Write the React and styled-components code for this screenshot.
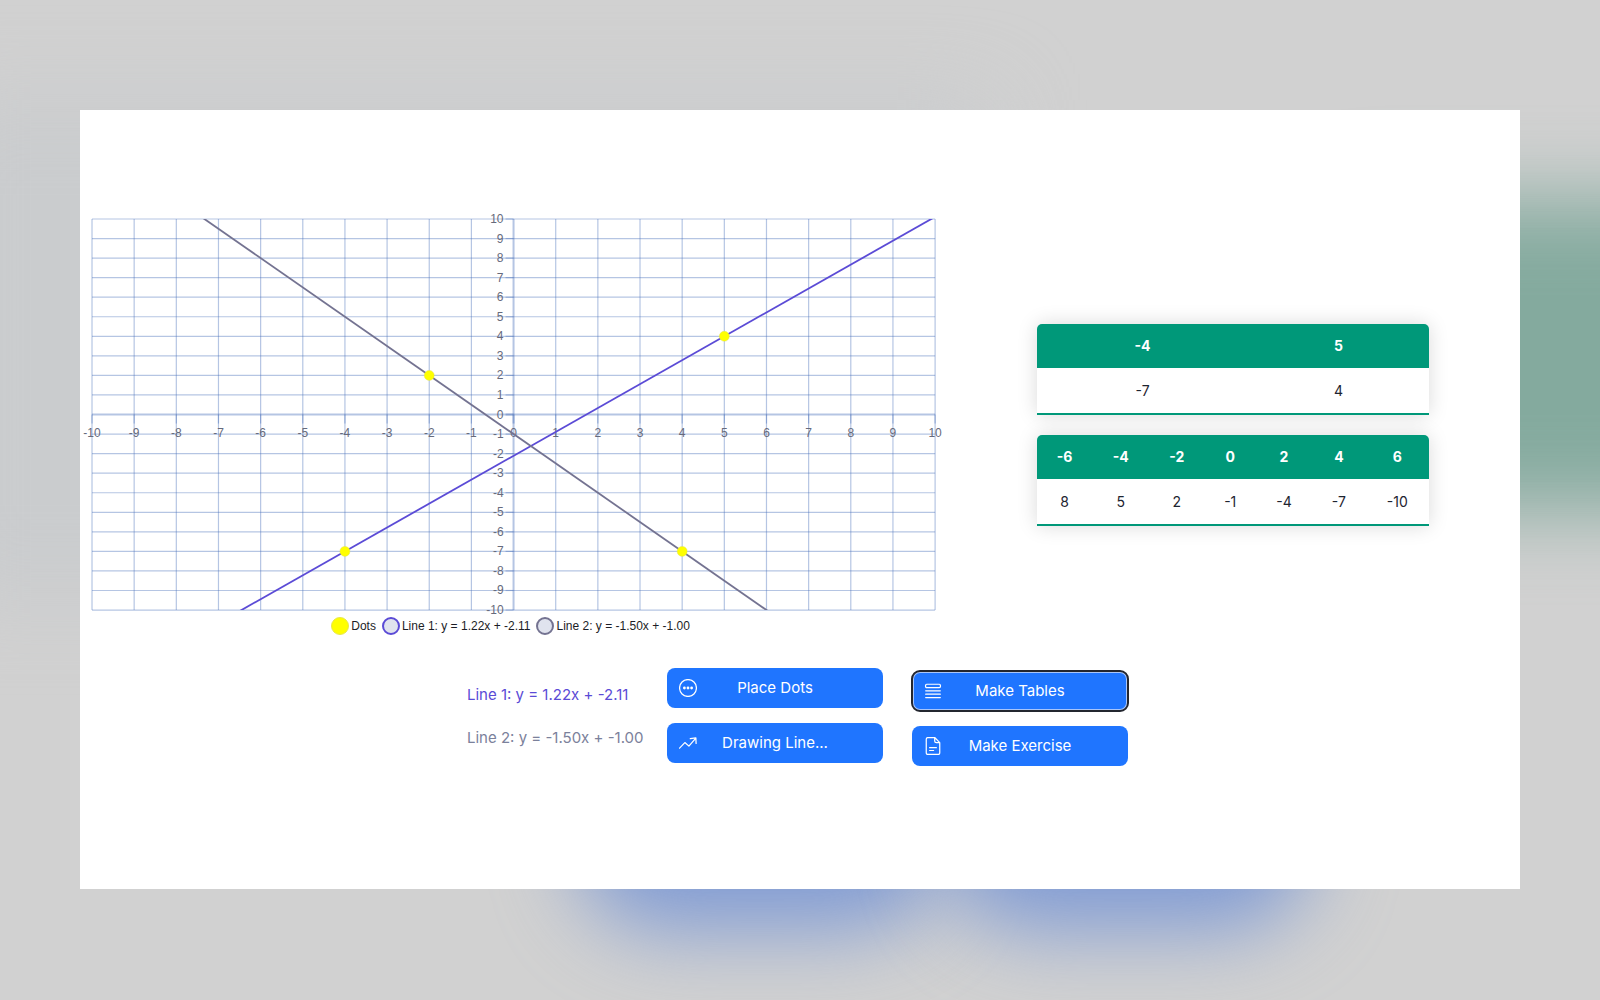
import styled, { createGlobalStyle } from "styled-components";

const GlobalStyle = createGlobalStyle`
	* {
		box-sizing: border-box;
	}

	body {
		margin: 0;
		font-family: Inter, "Liberation Sans", sans-serif;
		color: #1e2430;
	}
`;

const TICKS = Array.from({ length: 21 }, (_, i) => i - 10);

const DOTS = [
	{ x: -4, y: -7 },
	{ x: 5, y: 4 },
	{ x: -2, y: 2 },
	{ x: 4, y: -7 },
];

const LINES = [
	{ label: "Line 1: y = 1.22x + -2.11", color: "#5b4bd6", m: 11 / 9, b: -19 / 9 },
	{ label: "Line 2: y = -1.50x + -1.00", color: "#747391", m: -1.5, b: -1 },
];

const TABLES = [
	{ xs: [-4, 5], ys: [-7, 4] },
	{ xs: [-6, -4, -2, 0, 2, 4, 6], ys: [8, 5, 2, -1, -4, -7, -10] },
];

const LEFT = 12;
const TOP = 12;
const WIDTH = 843;
const HEIGHT = 391;

const px = (x) => LEFT + ((x + 10) * WIDTH) / 20;
const py = (y) => TOP + ((10 - y) * HEIGHT) / 20;

function Chart() {
	return (
		<Figure>
			<Plot viewBox="0 0 867 410" role="img" aria-label="Coordinate plane with two lines">
				<defs>
					<clipPath id="area">
						<rect x={LEFT} y={TOP} width={WIDTH} height={HEIGHT} />
					</clipPath>
				</defs>
				{TICKS.map((t) => (
					<g key={t} stroke="#466eb9" strokeOpacity="0.4" strokeWidth={t === 0 ? 2 : 1.2}>
						<line x1={px(t)} x2={px(t)} y1={TOP} y2={py(-10)} />
						<line x1={LEFT} x2={px(10)} y1={py(t)} y2={py(t)} />
						<line x1={px(t)} x2={px(t)} y1={py(0)} y2={py(0) + 9} />
						<line x1={px(0) - 8} x2={px(0)} y1={py(t)} y2={py(t)} />
					</g>
				))}
				{TICKS.map((t) => (
					<g key={t}>
						<AxisLabel x={px(t)} y={py(0) + 22} textAnchor="middle">
							{t}
						</AxisLabel>
						<AxisLabel x={px(0) - 10} y={py(t) + 4} textAnchor="end">
							{t}
						</AxisLabel>
					</g>
				))}
				<g clipPath="url(#area)" strokeWidth="1.8">
					{LINES.map((l) => (
						<line
							key={l.label}
							stroke={l.color}
							x1={px(-10)}
							y1={py(l.m * -10 + l.b)}
							x2={px(10)}
							y2={py(l.m * 10 + l.b)}
						/>
					))}
				</g>
				{DOTS.map((d) => (
					<circle key={`${d.x}/${d.y}`} cx={px(d.x)} cy={py(d.y)} r="5" fill="#ffff00" stroke="#d9dc6a" strokeWidth="0.4" />
				))}
			</Plot>
			<Legend>
				<LegendItem>
					<Marker $fill="#ffff00" $border="#e8e84a" $thin />
					Dots
				</LegendItem>
				{LINES.map((l) => (
					<LegendItem key={l.label}>
						<Marker $fill="#e0e3ee" $border={l.color} />
						{l.label}
					</LegendItem>
				))}
			</Legend>
		</Figure>
	);
}

function DotsIcon() {
	return (
		<Icon viewBox="0 0 16 16">
			<circle cx="8" cy="8" r="7.5" />
			<g fill="currentColor" stroke="none">
				<circle cx="4.8" cy="8" r="1.25" />
				<circle cx="8" cy="8" r="1.25" />
				<circle cx="11.2" cy="8" r="1.25" />
			</g>
		</Icon>
	);
}

function GraphIcon() {
	return (
		<Icon viewBox="0 0 16 16">
			<path d="M0.5 12.6 L5.2 7.6 L8.8 10.8 L14.2 4.6 M10 4.2 L15 3.4 L15.2 8.4" />
		</Icon>
	);
}

function TableIcon() {
	return (
		<Icon viewBox="0 0 16 16">
			<rect x="1.4" y="2" width="13.2" height="3" rx="1" />
			<path d="M1.5 7.8h13M1.5 10.8h13M1.5 13.8h13" />
		</Icon>
	);
}

function FileIcon() {
	return (
		<Icon viewBox="0 0 16 16">
			<path d="M9.5 0.5H3.5a1.5 1.5 0 0 0-1.5 1.5v12a1.5 1.5 0 0 0 1.5 1.5h9a1.5 1.5 0 0 0 1.5-1.5V5zM9.5 0.5V3.5A1.5 1.5 0 0 0 11 5h3M5 9.5h6M5 12h3.5" />
		</Icon>
	);
}

export default function App() {
	return (
		<Page>
			<GlobalStyle />
			<Haze />
			<GreenGlow />
			<BlueGlow $left="36%" $width="23%" />
			<BlueGlow $left="59%" $width="23%" />
			<Board>
				<Top>
					<Chart />
					<Tables>
						{TABLES.map((t) => (
							<Table key={t.xs.join()}>
								<thead>
									<tr>
										{t.xs.map((x) => (
											<th key={x} scope="col">
												{x}
											</th>
										))}
									</tr>
								</thead>
								<tbody>
									<tr>
										{t.ys.map((y) => (
											<td key={y}>{y}</td>
										))}
									</tr>
								</tbody>
							</Table>
						))}
					</Tables>
				</Top>
				<Controls>
					<Equations>
						<Equation $color="#5b4bd6">{LINES[0].label}</Equation>
						<Equation $color="#7b819b">{LINES[1].label}</Equation>
					</Equations>
					<Buttons>
						<Button type="button">
							<DotsIcon />
							<span>Place Dots</span>
						</Button>
						<Button type="button">
							<GraphIcon />
							<span>Drawing Line...</span>
						</Button>
					</Buttons>
					<Buttons $low>
						<Button type="button" $focused>
							<TableIcon />
							<span>Make Tables</span>
						</Button>
						<Button type="button">
							<FileIcon />
							<span>Make Exercise</span>
						</Button>
					</Buttons>
				</Controls>
			</Board>
		</Page>
	);
}

const Page = styled.div`
	position: relative;
	min-height: 100vh;
	padding: 110px 5% 111px;
	display: flex;
	overflow: hidden;

	background: #d1d1d1;
`;

// soft colour spots that show around the board
const Glow = styled.div`
	position: absolute;
	filter: blur(40px);
`;

const Haze = styled(Glow)`
	left: -4%;
	top: 10%;
	width: 66%;
	height: 50%;
	background: #caccce;
`;

const GreenGlow = styled(Glow)`
	left: 84%;
	right: -10%;
	top: 20%;
	height: 31%;
	background: #84aa9e;
`;

const BlueGlow = styled(Glow)`
	left: ${(p) => p.$left};
	width: ${(p) => p.$width};
	top: 66%;
	height: 27%;
	border-radius: 90px;
	background: #809bd4;
`;

const Board = styled.main`
	position: relative;
	flex: 1;
	min-width: 0;
	padding-top: 97px;

	background: #ffffff;
`;

const Top = styled.section`
	display: flex;
	align-items: flex-start;
	padding-right: 2px;
`;

const Figure = styled.div`
	width: 60.3%;
`;

const Plot = styled.svg`
	display: block;
	width: 100%;
	overflow: visible;
`;

const AxisLabel = styled.text`
	font-family: "Liberation Sans", Arial, sans-serif;
	font-size: 12px;
	fill: #666a7c;
`;

const Legend = styled.div`
	display: flex;
	justify-content: center;
	gap: 6px;
	padding-right: 6px;
`;

const LegendItem = styled.span`
	display: flex;
	align-items: center;
	gap: 2px;

	font-family: "Liberation Sans", Arial, sans-serif;
	font-size: 12px;
	line-height: 18px;
	color: #1c1d26;
`;

const Marker = styled.i`
	width: 18px;
	height: 18px;
	border: ${(p) => (p.$thin ? "1px" : "2px")} solid ${(p) => p.$border};
	border-radius: 50%;
	background: ${(p) => p.$fill};
`;

const Tables = styled.div`
	width: 392px;
	margin: 117px auto 0;

	display: flex;
	flex-direction: column;
	gap: 20px;
`;

const Table = styled.table`
	width: 100%;
	border-collapse: collapse;
	border-radius: 5px 5px 0 0;
	overflow: hidden;
	box-shadow: 0 0 20px rgba(0, 0, 0, 0.15);

	font-size: 14px;
	line-height: 20px;
	text-align: center;

	th,
	td {
		padding: 12px 15px;
	}

	th {
		background: #009879;
		color: #ffffff;
	}

	td {
		padding-top: 13px;
		background: #ffffff;
	}

	tbody tr {
		border-bottom: 2px solid #009879;
	}
`;

const Controls = styled.section`
	display: flex;
	justify-content: center;
	margin-top: 33px;
	padding-right: 5px;
`;

const Equations = styled.div`
	width: 200px;
	padding-top: 15px;

	display: flex;
	flex-direction: column;
	gap: 19px;
`;

const Equation = styled.p`
	margin: 0;

	font-size: 15px;
	line-height: 24px;
	color: ${(p) => p.$color};
	white-space: nowrap;
`;

const Buttons = styled.div`
	display: flex;
	flex-direction: column;
	gap: 15px;
	margin-left: ${(p) => (p.$low ? "29px" : "0")};
	padding-top: ${(p) => (p.$low ? "3px" : "0")};
`;

const Button = styled.button`
	width: 216px;
	height: 40px;
	padding: 0 12px;
	border: 0;
	border-radius: 8px;

	display: grid;
	grid-template-columns: 18px 1fr 18px;
	align-items: center;

	font-family: inherit;
	font-size: 15px;
	line-height: 24px;
	color: #ffffff;
	background: #1f75ff;

	${(p) =>
		p.$focused &&
		`
		box-shadow: inset 0 0 0 2px #a8c5fb;
		outline: 2px solid #23262f;
		outline-offset: -1px;
	`}
`;

const Icon = styled.svg`
	width: 18px;
	height: 18px;
	fill: none;
	stroke: currentColor;
	stroke-width: 1.1;
	stroke-linecap: round;
	stroke-linejoin: round;
`;
